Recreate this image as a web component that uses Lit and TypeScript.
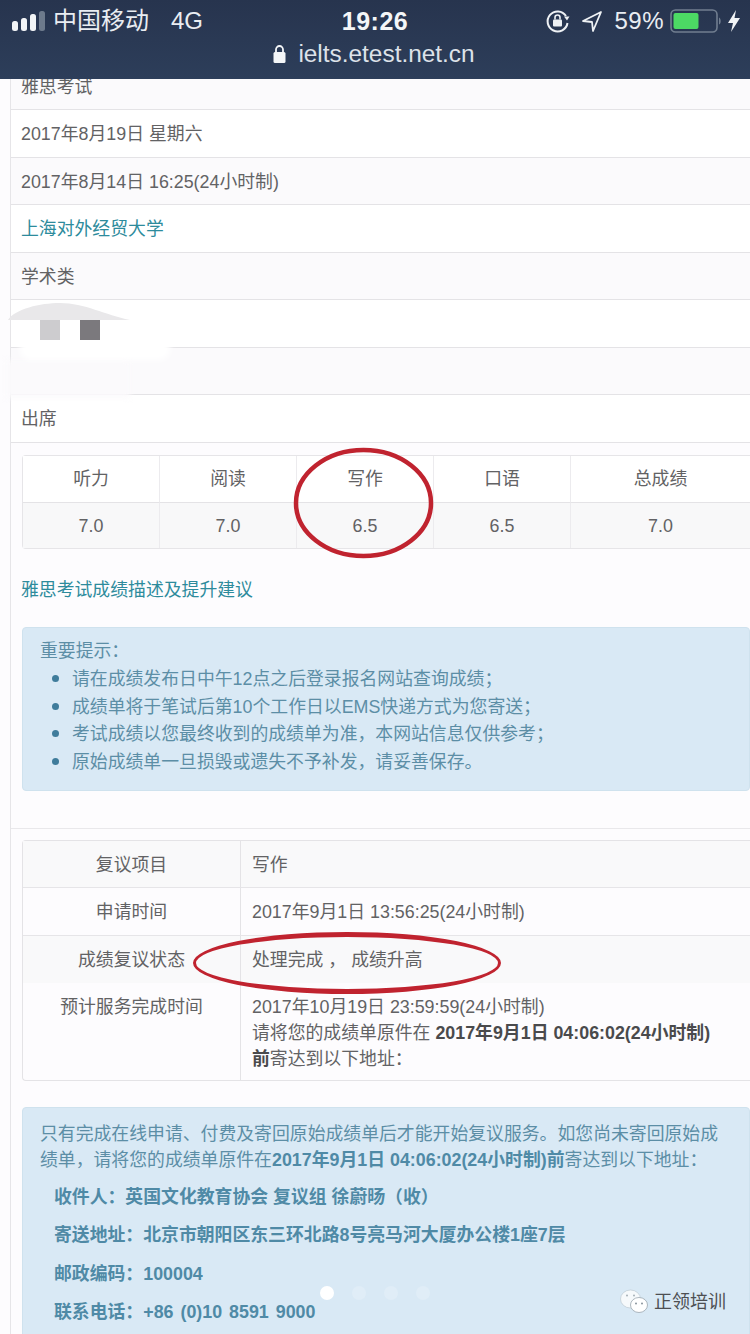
import { LitElement, html, css } from "lit";
import { customElement } from "lit/decorators.js";

const infoRows = [
  { text: "雅思考试", first: true },
  { text: "2017年8月19日 星期六" },
  { text: "2017年8月14日 16:25(24小时制)" },
  { text: "上海对外经贸大学", link: true },
  { text: "学术类" },
  { text: "" },
  { text: "" },
  { text: "出席" },
];

const scores = [
  ["听力", "7.0"],
  ["阅读", "7.0"],
  ["写作", "6.5"],
  ["口语", "6.5"],
  ["总成绩", "7.0"],
];

const tips = [
  "请在成绩发布日中午12点之后登录报名网站查询成绩；",
  "成绩单将于笔试后第10个工作日以EMS快递方式为您寄送；",
  "考试成绩以您最终收到的成绩单为准，本网站信息仅供参考；",
  "原始成绩单一旦损毁或遗失不予补发，请妥善保存。",
];

const address = [
  "收件人：英国文化教育协会 复议组 徐蔚旸（收）",
  "寄送地址：北京市朝阳区东三环北路8号亮马河大厦办公楼1座7层",
  "邮政编码：100004",
  "联系电话：+86 (0)10 8591 9000",
];

@customElement("app-root")
export class AppRoot extends LitElement {
  static styles = css`
    :host {
      display: block;
      position: relative;
      width: 750px;
      height: 1334px;
      overflow: hidden;
      background: #fdfcfe;
      font-family: "Liberation Sans", "Noto Sans CJK SC", sans-serif;
      font-size: 17.85px;
      line-height: 25.7px;
      color: #626264;
    }

    .header {
      height: 79px;
      box-sizing: border-box;
      padding-top: 7px;
      background: linear-gradient(#27344e, #2d3e5a);
      color: #e9edf2;
      font-size: 24px;
    }

    .status {
      height: 28px;
      display: grid;
      grid-template-columns: 1fr auto 1fr;
      align-items: center;
      line-height: 28px;
    }

    .status-left {
      display: flex;
      align-items: center;
      padding-left: 12px;
    }

    .status-left .net {
      margin-left: 22px;
    }

    .signal {
      margin-right: 5px;
    }

    .time {
      font-weight: 700;
      color: #f4f6f8;
      font-size: 25px;
      letter-spacing: 0.5px;
    }

    .status-right {
      display: flex;
      align-items: center;
      justify-content: flex-end;
      padding-right: 9px;
    }

    .status-right .pct {
      margin: 0 6px 0 11px;
      letter-spacing: 0.5px;
    }

    .url {
      display: flex;
      justify-content: center;
      align-items: center;
      gap: 12px;
      height: 38px;
      padding-right: 2px;
      font-size: 24.4px;
      color: #dde2e9;
    }

    .main {
      margin-left: 10px;
      border-left: 1px solid #e6e5e8;
      height: 1255px;
      overflow: hidden;
    }

    .row {
      height: 47.5px;
      box-sizing: border-box;
      padding: 12px 10px 0;
      border-bottom: 1.5px solid #e4e3e6;
      background: #ffffff;
    }

    .row.first {
      padding-top: 2px;
      margin-top: -6px;
      height: 37px;
    }

    .row.striped {
      background: #fbfafc;
    }

    .row.link {
      color: #2d8b9c;
    }

    .content {
      padding: 12px 0 0 11px;
    }

    .scores {
      display: grid;
      grid-template-columns: 137px 137px 137px 137px 180px;
      grid-template-rows: 47px 45px;
      border: 1px solid #e6e5e8;
      border-right: 0;
      border-radius: 4px 0 0 4px;
      text-align: center;
      line-height: 46px;
    }

    .scores > div {
      border-right: 1px solid #ecebee;
    }

    .scores .head {
      border-bottom: 1px solid #e4e3e6;
      background: #fff;
    }

    .scores .val {
      background: #f8f8f9;
    }

    .advice {
      margin: 29px 0 0 -1px;
      color: #2d8b9c;
    }

    .alert {
      box-sizing: border-box;
      background: #d9e9f5;
      border: 1px solid #cfe2ee;
      border-radius: 4px;
      color: #5c8ea6;
    }

    .tip-box {
      margin-top: 24px;
      height: 164px;
      padding: 11px 17px 0;
    }

    .tip-box ul {
      margin: 0;
      padding-left: 32px;
    }

    .tip-box li::marker {
      color: #3f7c9b;
      font-size: 22px;
    }

    .rule {
      margin: 37px 0 0 -11px;
      border-top: 1px solid #e9e8eb;
    }

    .review {
      margin-top: 11px;
      border: 1px solid #e4e3e6;
      border-right: 0;
      border-radius: 4px 0 0 4px;
      display: grid;
      grid-template-columns: 218px 1fr;
      grid-template-rows: 47px 48px 47px 97px;
    }

    .review > div {
      padding-top: 12px;
      box-sizing: border-box;
    }

    .review .key {
      text-align: center;
      border-right: 1px solid #e4e3e6;
    }

    .review .value {
      padding-left: 11px;
    }

    .review .shade {
      background: #f9f9fa;
    }

    .review .line {
      border-bottom: 1px solid #e6e5e8;
    }

    .review b {
      color: #4a4a4c;
    }

    .mail-box {
      margin-top: 26px;
      height: 240px;
      padding: 14px 17px 0;
    }

    .mail-box b {
      color: #4f8aa6;
    }

    .mail-box p {
      margin: 0;
      padding-left: 14px;
      font-weight: 700;
      height: 38.6px;
      line-height: 38.6px;
      color: #4f8aa6;
    }

    .mail-box p:last-child {
      word-spacing: 2px;
    }

    .mail-box .addr {
      margin-top: 4px;
    }

    .marks {
      position: absolute;
      left: 0;
      top: 0;
      pointer-events: none;
    }

    .patch {
      position: absolute;
      left: 20px;
      top: 320px;
      width: 150px;
      height: 40px;
      background: #fff;
      border-radius: 10px;
      filter: blur(3px);
    }

    .patch-low {
      position: absolute;
      left: 5px;
      top: 360px;
      width: 125px;
      height: 38px;
      background: #fbfafc;
      filter: blur(3px);
    }

    .pix {
      position: absolute;
      top: 320px;
      width: 20px;
      height: 20px;
    }

    .pix.light {
      left: 40px;
      background: #cdcccf;
    }

    .pix.dark {
      left: 80px;
      background: #7b797d;
    }

    .dots {
      position: absolute;
      left: 320px;
      top: 1286px;
      display: flex;
      gap: 18px;
    }

    .dots span {
      width: 14px;
      height: 14px;
      border-radius: 50%;
      background: #e0edf7;
    }

    .dots span.on {
      background: #ffffff;
    }

    .watermark {
      position: absolute;
      left: 620px;
      top: 1289px;
      display: flex;
      align-items: center;
      gap: 6px;
      color: #4d4f52;
      font-size: 18px;
      line-height: 26px;
    }
  `;

  render() {
    return html`
      <div class="header">
        <div class="status">
          <div class="status-left">
            <svg class="signal" width="36" height="22" viewBox="0 0 36 22">
              <rect x="0" y="11" width="6" height="10" rx="2.5" fill="#f2f4f6" />
              <rect x="9" y="8" width="6" height="13" rx="2.5" fill="#f2f4f6" />
              <rect x="18" y="4" width="6" height="17" rx="2.5" fill="#f2f4f6" />
              <rect x="27" y="1" width="6" height="20" rx="2.5" fill="#6d7a8c" />
            </svg>
            <span>中国移动</span>
            <span class="net">4G</span>
          </div>
          <div class="time">19:26</div>
          <div class="status-right">
            <svg width="26" height="26" viewBox="0 0 26 26" fill="none">
              <path d="M21 8a10 10 0 1 0 1.5 7" stroke="#eef1f4" stroke-width="2" />
              <path d="M19 8.500l5.500 0-2.500 4z" fill="#eef1f4" />
              <rect x="8" y="11.500" width="9" height="7" rx="1" fill="#eef1f4" />
              <path d="M10 11.500v-2a2.500 2.500 0 0 1 5 0v2" stroke="#eef1f4" stroke-width="1.600" />
            </svg>
            <svg style="margin-left:10px" width="22" height="24" viewBox="0 0 22 24" fill="none">
              <path d="M20 3L2 12l9 1 1 9z" stroke="#eef1f4" stroke-width="1.800" stroke-linejoin="round" />
            </svg>
            <span class="pct">59%</span>
            <svg width="52" height="24" viewBox="0 0 52 24">
              <rect x="1" y="1" width="46" height="22" rx="4.500" fill="none" stroke="#717e90" stroke-width="1.600" />
              <rect x="3.500" y="4" width="25" height="16" rx="2" fill="#4cd964" />
              <path d="M49 8.500c2 .5 2.500 6.500 0 7z" fill="#717e90" />
            </svg>
            <svg style="margin-left:5px" width="14" height="24" viewBox="0 0 14 24">
              <path d="M9 1L1 14h5l-2 9 9-14H7.500z" fill="#f2f4f6" />
            </svg>
          </div>
        </div>
        <div class="url">
          <svg width="13" height="18" viewBox="0 0 13 18" fill="none">
            <rect x="0.500" y="7" width="12" height="11" rx="1.500" fill="#f4f6f8" />
            <path d="M3 7.500V4.500a3.500 3.500 0 0 1 7 0v3" stroke="#f4f6f8" stroke-width="1.800" />
          </svg>
          <span>ielts.etest.net.cn</span>
        </div>
      </div>

      <div class="main">
        ${infoRows.map(
          (r, i) => html`<div
            class="row ${r.first ? "first" : ""} ${i % 2 === 0 ? "striped" : ""} ${r.link ? "link" : ""}"
          >${r.text}</div>`
        )}

        <div class="content">
          <div class="scores">
            ${scores.map((s) => html`<div class="head">${s[0]}</div>`)}
            ${scores.map((s) => html`<div class="val">${s[1]}</div>`)}
          </div>

          <div class="advice">雅思考试成绩描述及提升建议</div>

          <div class="alert tip-box">
            重要提示：
            <ul>
              ${tips.map((t) => html`<li>${t}</li>`)}
            </ul>
          </div>

          <div class="rule"></div>

          <div class="review">
            <div class="key shade line">复议项目</div>
            <div class="value shade line">写作</div>
            <div class="key line">申请时间</div>
            <div class="value line">2017年9月1日 13:56:25(24小时制)</div>
            <div class="key shade">成绩复议状态</div>
            <div class="value shade">处理完成 ， 成绩升高</div>
            <div class="key">预计服务完成时间</div>
            <div class="value">
              2017年10月19日 23:59:59(24小时制)<br />
              请将您的成绩单原件在 <b>2017年9月1日 04:06:02(24小时制)</b><br />
              <b>前</b>寄达到以下地址：
            </div>
          </div>

          <div class="alert mail-box">
            只有完成在线申请、付费及寄回原始成绩单后才能开始复议服务。如您尚未寄回原始成绩单，请将您的成绩单原件在<b>2017年9月1日 04:06:02(24小时制)前</b>寄达到以下地址：
            <div class="addr">
              ${address.map((a) => html`<p>${a}</p>`)}
            </div>
          </div>
        </div>
      </div>

      <div class="patch-low"></div>
      <div class="patch"></div>
      <div class="pix light"></div>
      <div class="pix dark"></div>

      <svg class="marks" width="750" height="1334" fill="none">
        <path d="M8 320C15 309 40 303 60 303C85 303 105 315 130 320Z" fill="#e9e8ea" />
        <ellipse cx="363.500" cy="503" rx="67.500" ry="53" stroke="#c0232f" stroke-width="4.500" />
        <path
          fill="#c0232f"
          fill-rule="evenodd"
          d="M193 963a154 31 0 1 0 308 0a154 31 0 1 0-308 0ZM196 963a151 26 0 1 0 302 0a151 26 0 1 0-302 0Z"
        />
      </svg>

      <div class="dots">
        <span class="on"></span><span></span><span></span><span></span>
      </div>

      <div class="watermark">
        <svg width="28" height="26" viewBox="0 0 28 26">
          <ellipse cx="10.500" cy="10" rx="10" ry="9" fill="#f6f9fb" stroke="#b9c4cc" stroke-width="0.600" />
          <ellipse cx="19" cy="16" rx="8.500" ry="7.500" fill="#ffffff" stroke="#9aa6af" stroke-width="0.800" />
          <circle cx="16" cy="14.500" r="1" fill="#8a959e" />
          <circle cx="22" cy="14.500" r="1" fill="#8a959e" />
          <circle cx="7" cy="6.500" r="1" fill="#a5afb7" />
          <circle cx="14" cy="6.500" r="1" fill="#a5afb7" />
        </svg>
        <span>正领培训</span>
      </div>
    `;
  }
}
